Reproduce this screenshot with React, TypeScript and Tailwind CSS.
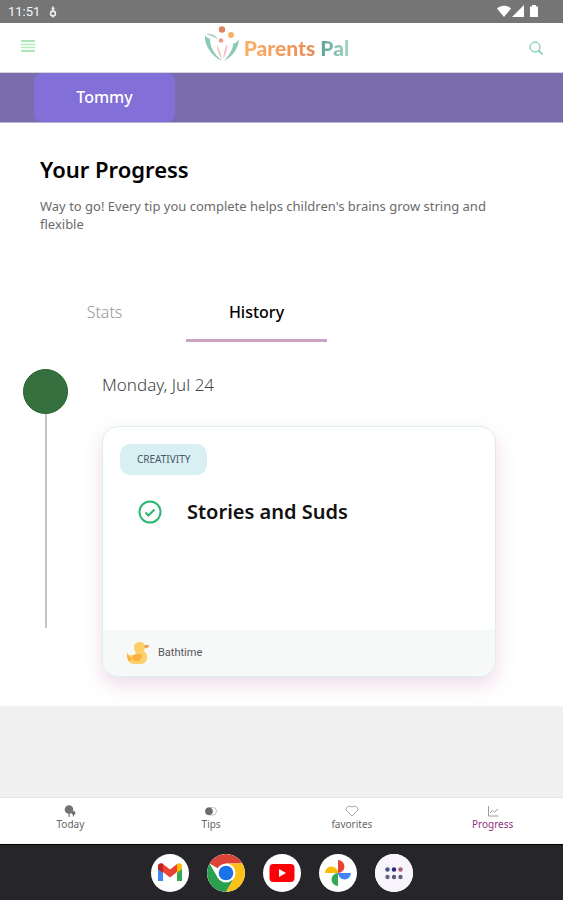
import { useState } from 'react'

type NavItem = {
  id:    string
  label: string
  icon:  React.ReactNode
}

const navItems: NavItem[] = [
  {
    id: 'today',
    label: 'Today',
    icon: (
      <svg viewBox="0 0 12 12" className="h-3 w-3" fill="#737373">
        <circle cx="5" cy="4.5" r="4.3" />
        <circle cx="9.5" cy="8" r="2" />
        <path d="M4.5 8h1.2v4H4.5zM9 9h1v2.5H9z" />
      </svg>
    ),
  },
  {
    id: 'tips',
    label: 'Tips',
    icon: (
      <svg viewBox="0 0 12 12" className="h-3 w-3">
        <rect x="0.5" y="2.5" width="11" height="7.5" rx="3.7" fill="#fff" stroke="#b5b5b5" strokeWidth="0.8" />
        <circle cx="4" cy="6.2" r="3.8" fill="#6b6b6b" />
      </svg>
    ),
  },
  {
    id: 'favorites',
    label: 'favorites',
    icon: (
      <svg viewBox="0 0 12 12" className="h-3 w-3" fill="none" stroke="#a3a3a3">
        <path d="M6 11L1 6C-0.4 4 0.6 1.3 3 1.3C4.4 1.3 5.3 1.6 6 2.2C6.7 1.6 7.6 1.3 9 1.3C11.4 1.3 12.4 4 11 6z" />
      </svg>
    ),
  },
  {
    id: 'progress',
    label: 'Progress',
    icon: (
      <svg viewBox="0 0 12 12" className="h-3 w-3" fill="none" stroke="#9a9a9a">
        <path d="M1.5 1v10H11.5M3 8l2.5-2.5 2 1.5L11 4" />
      </svg>
    ),
  },
]

function StatusBar() {
  return (
    <div className="flex h-[23px] items-center bg-[#757575] pl-2 pr-6 font-[Roboto,sans-serif] text-[13px] leading-none text-gray-100">
      <span>11:51</span>
      <svg viewBox="0 0 10 12" className="ml-2 h-3 w-2.5" fill="none" stroke="#eee" strokeWidth="1.6">
        <circle cx="5" cy="7.5" r="2.4" />
        <path d="M5 0.5V5M3.5 2.5h3M5 9.5V11.5" />
      </svg>
      <svg viewBox="0 0 42 13" className="ml-auto h-[13px] w-[42px]" fill="#fff">
        <path d="M0 3.5C4 -0.2 10 -0.2 14 3.5L7 12z" />
        <path d="M27 0v12H15z" />
        <path d="M35 0h4v1.5h2V12h-8V1.5h2z" />
      </svg>
    </div>
  )
}

function Logo() {
  return (
    <a href="#home" className="flex items-center gap-1">
      <svg viewBox="0 0 36 36" className="mb-2 h-9 w-9">
        <path d="M1 9C0 20 8 30 18 35 10 28 6 21 6 13 4 12 2 11 1 9z" fill="#8cc9b4" />
        <path d="M2 8c6-1 10 1 12 6-3-3-7-4-12-6z" fill="#a5d6c4" />
        <path d="M35 13C35 22 28 31 20 35 27 27 29 22 29 18 32 17 34 15 35 13z" fill="#8cc9b4" />
        <path d="M13 19c0 6 2 11 5 15-1-5-2-10-5-15z" fill="#f7c4bb" />
        <path d="M23 18c1 5-1 11-4 15 1-5 1-10 4-15z" fill="#f7c4d0" />
        <circle cx="18" cy="3.5" r="3.2" fill="#db8264" />
        <circle cx="27" cy="9" r="3" fill="#f6b26b" />
        <circle cx="17" cy="14.5" r="2.3" fill="#ee9a84" />
      </svg>
      <span className="font-[Lato,sans-serif] text-[21px] font-black leading-6">
        <span className="bg-linear-to-r from-[#fbb066] to-[#ec8a58] bg-clip-text text-transparent">Parents</span>{' '}
        <span className="bg-linear-to-r from-[#5fa596] to-[#a5d6c3] bg-clip-text text-transparent">Pal</span>
      </span>
    </a>
  )
}

function Header() {
  return (
    <header className="flex h-[50px] items-center justify-between border-b border-gray-300 bg-white px-5">
      <button aria-label="Open menu" className="w-10 pb-1">
        <svg viewBox="0 0 16 12" className="h-3 w-4" strokeWidth="1.5">
          <path d="M1 1h14M1 11h14" stroke="#8ddf9f" />
          <path d="M1 4.5h14M1 7.5h14" stroke="#b4ebc0" />
        </svg>
      </button>
      <Logo />
      <button aria-label="Search" className="flex w-[50px] justify-end">
        <svg viewBox="0 0 14 14" className="h-3.5 w-3.5" fill="none" stroke="#5cc496">
          <circle cx="6" cy="6" r="5" />
          <path d="M9.5 9.5l4 4" strokeWidth="1.3" />
        </svg>
      </button>
    </header>
  )
}

function Duck() {
  return (
    <svg viewBox="0 0 24 24" className="h-6 w-6">
      <path d="M8 6c0-4 3-5 6-5s5 2 5 5c0 2-1 3-1 4 2 2 4 4 3 8-1 4-4 5-7 5H8c-5 0-7-4-7-11 2 2 4 3 7 2 2-1 2-2 1-4-1-1-1-2-1-4z" fill="#fcd06b" />
      <path d="M6 15c3-2 7-3 10-1-1 4-2 6-5 6s-5-2-5-5zM1 12c1 3 3 4 5 5l-2 4c-3-2-3-6-3-9z" fill="#fbb03c" />
      <path d="M18 4h5c0 2-2 4-4 3z" fill="#f2a050" />
    </svg>
  )
}

function HistoryCard() {
  return (
    <article className="mt-[29px] overflow-hidden rounded-2xl border border-[#d9efed] bg-white shadow-[0_8px_18px_1px_rgba(205,150,185,0.3)]">
      <div className="h-[203px] px-[17px] pt-[17px]">
        <span className="inline-flex h-[31px] items-center rounded-[10px] bg-[#d8f0f4] px-[17px] text-[10px] text-gray-600">
          CREATIVITY
        </span>
        <div className="mt-[23px] flex items-center gap-6 pl-[17px]">
          <svg viewBox="0 0 26 26" className="h-[26px] w-[26px] shrink-0" fill="none" stroke="#2db56f" strokeWidth="2">
            <circle cx="13" cy="13" r="10.5" />
            <path d="M8.5 13.5l3 3 6-6" />
          </svg>
          <h3 className="text-xl font-semibold leading-7 text-[#111]">Stories and Suds</h3>
        </div>
      </div>
      <div className="flex h-[46px] items-center gap-2 bg-[#f7f9f9] pl-[23px] text-[11px] text-[#555]">
        <Duck />
        <span className="font-[Roboto,sans-serif]">Bathtime</span>
      </div>
    </article>
  )
}

const apps = [
  {
    name: 'Gmail',
    icon: (
      <svg viewBox="0 0 38 38" className="h-[38px] w-[38px]">
        <path d="M7 12v15h5V17z" fill="#4285f4" />
        <path d="M31 12v15h-5V17z" fill="#34a853" />
        <path d="M7 12c0-3 3-3.5 5-2l7 5.5 7-5.5v8l-7 5.5-7-5.5-5-4z" fill="#ea4335" />
        <path d="M26 10c2-1.5 5-1 5 2v3l-5 4z" fill="#fbbc04" />
        <path d="M7 12c0-2 3-3 5-2v9l-5-4z" fill="#c5221f" />
      </svg>
    ),
  },
  {
    name: 'Chrome',
    icon: (
      <svg viewBox="0 0 38 38" className="h-[38px] w-[38px]">
        <path d="M19 19L2.55 9.5A19 19 0 0 1 35.45 9.5H19z" fill="#db4437" />
        <path d="M2.55 9.5A19 19 0 0 0 19 38l8.23-14.25H10.77z" fill="#28a04c" />
        <path d="M35.45 9.5A19 19 0 0 1 19 38l8.23-14.25L19 9.5z" fill="#fbc116" />
        <circle cx="19" cy="19" r="9.5" fill="#fff" />
        <circle cx="19" cy="19" r="7.3" fill="#1a73e8" />
      </svg>
    ),
  },
  {
    name: 'YouTube',
    icon: (
      <svg viewBox="0 0 38 38" className="h-[38px] w-[38px]">
        <rect x="6.5" y="10" width="25" height="18" rx="4" fill="#fb0007" />
        <path d="M16 15l7 4-7 4z" fill="#fff" />
      </svg>
    ),
  },
  {
    name: 'Photos',
    icon: (
      <svg viewBox="0 0 38 38" className="h-[38px] w-[38px]">
        <path d="M19 19V6a6.5 6.5 0 0 1 0 13z" fill="#ea4335" />
        <path d="M19 19h13a6.5 6.5 0 0 1-13 0z" fill="#4285f4" />
        <path d="M19 19v13a6.5 6.5 0 0 1 0-13z" fill="#34a853" />
        <path d="M19 19H6a6.5 6.5 0 0 1 13 0z" fill="#fbbc04" />
      </svg>
    ),
  },
  {
    name: 'All apps',
    icon: (
      <svg viewBox="0 0 38 38" className="h-[38px] w-[38px]">
        <rect width="38" height="38" fill="#f8f4fc" />
        <circle cx="12.5" cy="15.5" r="2.2" fill="#46528f" />
        <circle cx="19" cy="15.5" r="2.2" fill="#252a80" />
        <circle cx="25.5" cy="15.5" r="2.2" fill="#a55f70" />
        <circle cx="12.5" cy="23" r="2.2" fill="#68627c" />
        <circle cx="19" cy="23" r="2.2" fill="#5d5a78" />
        <circle cx="25.5" cy="23" r="2.2" fill="#626080" />
      </svg>
    ),
  },
]

export default function App() {
  const [tab, setTab]         = useState('history')
  const [current, setCurrent] = useState('progress')

  return (
    <div className="flex min-h-screen flex-col bg-[#f0f0f0] font-['Noto_Sans',sans-serif]">
      <StatusBar />
      <Header />

      {/* Child switcher */}
      <div className="flex h-[50px] border-b border-[#b9b2d2] bg-[#7b6dad] pl-[34px]">
        <button className="w-[141px] rounded-lg bg-[#826fd8] pb-0.5 text-base font-medium text-white">Tommy</button>
      </div>

      <main className="flex-1">
        <div className="bg-white pb-[29px]">
          <section className="px-10 pt-8">
            <h1 className="text-[22px] font-semibold leading-7 text-black">Your Progress</h1>
            <p className="mt-3.5 text-[13px] leading-[18px] text-[#6b6b6b]">
              Way to go! Every tip you complete helps children's brains grow string and flexible
            </p>
          </section>

          <div role="tablist" className="mt-[52px] flex pl-[34px]">
            <button
              role="tab"
              aria-selected={tab === 'stats'}
              onClick={() => setTab('stats')}
              className={`h-[57px] w-[141px] border-b-3 text-base ${tab === 'stats' ? 'border-[#c9a3c0] font-medium text-black' : 'border-transparent font-light text-[#999]'}`}
            >
              Stats
            </button>
            <button
              role="tab"
              aria-selected={tab === 'history'}
              onClick={() => setTab('history')}
              className={`ml-[11px] h-[57px] w-[141px] border-b-3 text-base ${tab === 'history' ? 'border-[#c9a3c0] font-medium text-black' : 'border-transparent font-light text-[#999]'}`}
            >
              History
            </button>
          </div>

          {/* Timeline */}
          <section className="mt-[27px] flex pl-[23px] pr-[67px]">
            <div className="flex w-[45px] shrink-0 flex-col items-center">
              <span className="h-[45px] w-[45px] rounded-full border border-[#1d6425] bg-[#37703f]" />
              <span className="mb-[49px] w-0.5 flex-1 bg-[#c4c4c4]" />
            </div>
            <div className="ml-[34px] flex-1 pt-1">
              <h2 className="text-[17px] font-light leading-6 text-[#444]">Monday, Jul 24</h2>
              <HistoryCard />
            </div>
          </section>
        </div>
      </main>

      <nav className="grid h-[47px] grid-cols-4 border-t border-gray-200 bg-white">
        {navItems.map(item => (
          <button
            key={item.id}
            onClick={() => setCurrent(item.id)}
            className={`flex flex-col items-center pt-[7px] text-[10px] leading-[14px] ${current === item.id ? 'text-[#94307f]' : 'text-[#666]'}`}
          >
            {item.icon}
            {item.label}
          </button>
        ))}
      </nav>

      <footer className="flex h-14 items-center justify-center gap-[18px] border-t border-black bg-[#26262a]">
        {apps.map(app => (
          <button key={app.name} aria-label={app.name} className="overflow-hidden rounded-full bg-white">
            {app.icon}
          </button>
        ))}
      </footer>
    </div>
  )
}
